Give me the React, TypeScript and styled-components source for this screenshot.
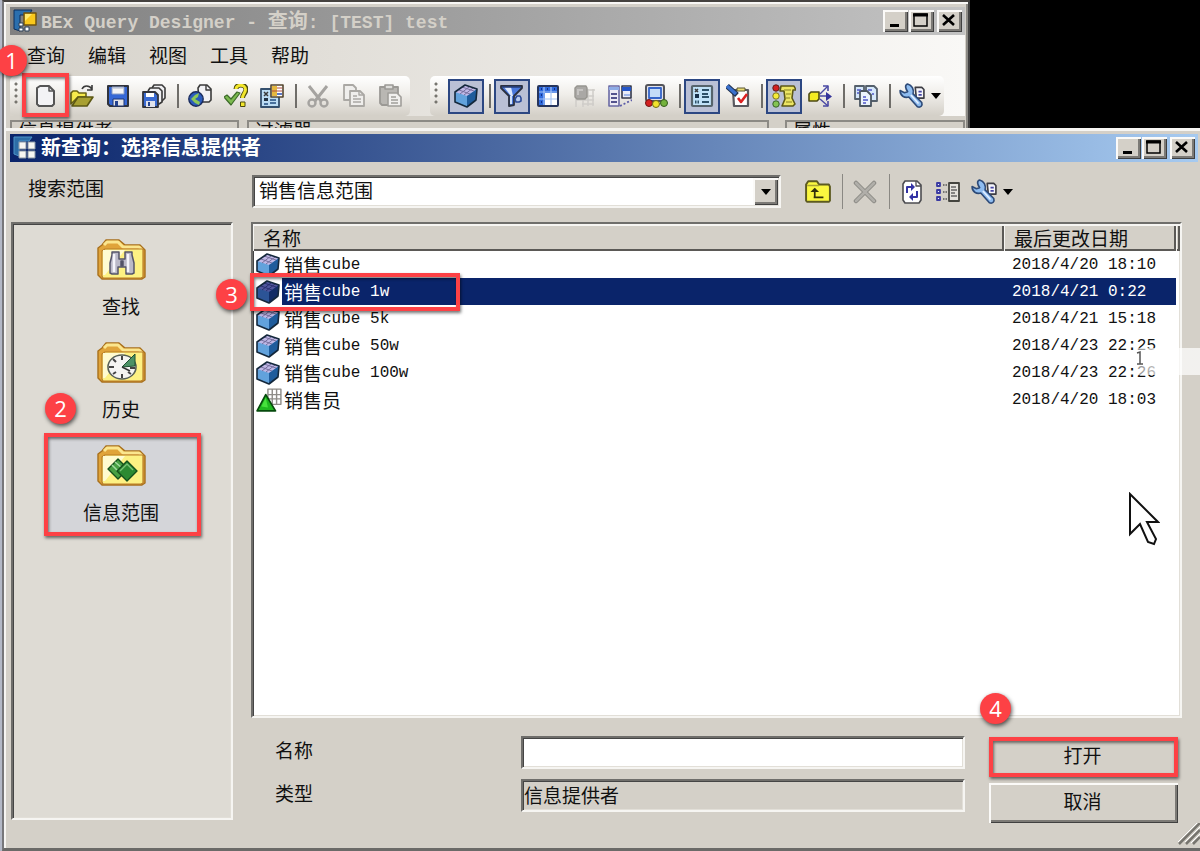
import React from 'react';
import styled, { createGlobalStyle, css } from 'styled-components';

const CJK = '"Noto Sans CJK SC", sans-serif';
const MONO = '"Liberation Mono", "Noto Sans CJK SC", monospace';
const FACE = '#d4d0c8';
const RED = '#fd4145';
const NAVY = '#0a246a';

const Global = createGlobalStyle`
  * { box-sizing: border-box; }
  body { margin: 0; background: #000; font-family: ${CJK}; font-size: 19px; line-height: 24px; color: #111; }
  button, input, select { font: inherit; color: inherit; margin: 0; }
  svg { display: block; }
`;

const raised = css`
  background: ${FACE};
  border: 0;
  box-shadow: inset 2px 2px 0 #fbfaf8, inset -1px -1px 0 #404040, inset -3px -3px 0 #7c7a76;
`;

const sunken = css`
  border: 2px solid;
  border-color: #6f6e6b #f6f5f2 #f6f5f2 #6f6e6b;
  box-shadow: inset 1px 1px 0 #454545, inset -1px -1px 0 #e2dfd8;
`;

/* ---------- windows ---------- */

const Page = styled.div`
  min-height: 100vh;
  display: flex;
  flex-direction: column;
  padding-left: 2px;
  background: linear-gradient(to right, #b3b8c6 2px, #000 2px);
`;

const MainWindow = styled.section`
  height: 128px;
  overflow: hidden;
  margin-right: 230px;
  padding: 3px 3px 0 6px;
  background: ${FACE};
  border: solid;
  border-width: 2px 2px 0 2px;
  border-color: #45423f #404040 #404040 #77777a;
  box-shadow: inset 2px 2px 0 #f8f7f5, inset -2px 0 0 #8b8984;
`;

const Dialog = styled.section`
  position: relative;
  flex: 1;
  display: flex;
  flex-direction: column;
  padding: 4px 0 0 6px;
  background: ${FACE};
  border: solid;
  border-width: 0 0 3px 2px;
  border-color: #6b6a68 #6b6a68 #6b6a68 #77777a;
  box-shadow: inset 2px 3px 0 #f6f5f2;
`;

const TitleBar = styled.header<{ $active?: boolean }>`
  display: flex;
  align-items: center;
  height: 28px;
  flex: none;
  padding: 0 3px;
  margin: ${p => (p.$active ? '2px 2px 0 0' : '2px 0 0')};
  color: ${p => (p.$active ? '#fff' : FACE)};
  background: ${p =>
    p.$active ? `linear-gradient(to right, ${NAVY}, #a6caf0)` : 'linear-gradient(to right, #808080, #c3c3c3)'};
`;

const Title = styled.h1`
  flex: 1;
  margin: 0 0 0 4px;
  font-family: ${MONO};
  font-size: 18px;
  line-height: 24px;
  font-weight: 700;
  white-space: pre;
`;

const TitleHan = styled.span`
  font-family: ${CJK};
  font-size: 20px;
`;

const Controls = styled.div`
  display: flex;
  gap: 1px;
`;

const ControlButton = styled.button<{ $apart?: boolean }>`
  ${raised}
  display: flex;
  align-items: center;
  justify-content: center;
  width: 25px;
  height: 22px;
  padding: 0 2px 2px 0;
  margin-left: ${p => (p.$apart ? '2px' : 0)};
`;

/* ---------- main window chrome ---------- */

const Chrome = styled.div`
  background: linear-gradient(to right, #d6d2ca, #f9f8f6);
`;

const MenuBar = styled.nav`
  display: flex;
  gap: 23px;
  height: 41px;
  padding: 8px 0 0 17px;
`;

const MenuButton = styled.button`
  padding: 0;
  height: 24px;
  border: 0;
  background: none;
  line-height: 24px;
`;

const ToolRow = styled.div`
  display: flex;
  gap: 20px;
`;

const ToolStrip = styled.div`
  display: flex;
  align-items: center;
  height: 40px;
  padding-right: 2px;
  border-radius: 5px;
  background: linear-gradient(#fff, #f0eeea 45%, #d3cfc7);
`;

const Grip = styled.span`
  width: 4px;
  height: 24px;
  margin: 0 10px 4px 4px;
  background: radial-gradient(circle at 2px 2px, #77756f 1px, transparent 2px) 0 0 / 4px 6px;
`;

const ToolButton = styled.button<{ $on?: boolean }>`
  position: relative;
  display: flex;
  align-items: center;
  justify-content: center;
  width: 36px;
  height: 35px;
  padding: 0;
  border: 2px solid ${p => (p.$on ? '#2c4782' : 'transparent')};
  background: ${p => (p.$on ? '#bac0d5' : 'none')};
`;

const Divider = styled.span<{ $tall?: boolean }>`
  width: ${p => (p.$tall ? '1px' : '2px')};
  height: ${p => (p.$tall ? '35px' : '24px')};
  margin: ${p => (p.$tall ? '0 4px 0 6px' : '0 3px 0 5px')};
  background: ${p => (p.$tall ? '#8a8883' : '#6f6d69')};
`;

const DropButton = styled.button`
  display: flex;
  align-items: center;
  justify-content: center;
  width: 12px;
  height: 35px;
  padding: 0;
  border: 0;
  background: none;
`;

const Panels = styled.div`
  display: grid;
  grid-template-columns: 229px 1fr 180px;
  gap: 8px;
  height: 12px;
  padding-top: 4px;
  background: ${FACE};
`;

const Panel = styled.div<{ $gap?: boolean }>`
  height: 8px;
  overflow: hidden;
  padding-left: 6px;
  margin-right: ${p => (p.$gap ? '8px' : 0)};
  border: solid #8c8a85;
  border-width: 2px 2px 0;
  line-height: 16px;
`;

/* ---------- dialog ---------- */

const SearchRow = styled.div`
  display: flex;
  align-items: center;
  padding: 13px 186px 14px 18px;
`;

const SearchLabel = styled.label`
  width: 224px;
  padding-bottom: 8px;
`;

const Combo = styled.div`
  ${sunken}
  position: relative;
  flex: 1;
  height: 33px;
  background: #fff;
`;

const ComboSelect = styled.select`
  appearance: none;
  display: block;
  width: 100%;
  height: 29px;
  padding: 0 30px 3px 5px;
  border: 0;
  background: transparent;
`;

const ComboArrow = styled.span`
  ${raised}
  position: absolute;
  top: 1px;
  right: 1px;
  display: flex;
  align-items: center;
  justify-content: center;
  width: 25px;
  height: 27px;
  pointer-events: none;
`;

const DialogTools = styled.div`
  display: flex;
  align-items: center;
  height: 33px;
  margin-left: 19px;
`;

const Body = styled.div`
  flex: 1;
  display: grid;
  grid-template-columns: 222px 1fr;
  gap: 18px;
  padding: 0 18px 0 1px;
`;

const Sidebar = styled.nav`
  ${sunken}
  display: flex;
  flex-direction: column;
  align-items: center;
  padding-top: 3px;
  margin-bottom: 3px;
  background: #dedbd4;
`;

const SideButton = styled.button<{ $on?: boolean }>`
  position: relative;
  display: flex;
  flex-direction: column;
  align-items: center;
  gap: 14px;
  width: 157px;
  height: 103px;
  padding: 12px 2px 12px 0;
  border: 0;
  line-height: 24px;
  background: ${p => (p.$on ? '#d4d5d9' : 'none')};
`;

const Content = styled.div`
  display: flex;
  flex-direction: column;
`;

const FileWell = styled.div`
  ${sunken}
  flex: 1;
  margin-bottom: 18px;
  background: #fff;
`;

const FileTable = styled.table`
  width: 100%;
  border-collapse: separate;
  border-spacing: 0;
  table-layout: fixed;
  font-family: ${MONO};
  font-size: 16px;
`;

const Head = styled.th`
  height: 27px;
  padding: 0 0 0 10px;
  text-align: left;
  font-family: ${CJK};
  font-size: 19px;
  line-height: 24px;
  font-weight: 400;
  background: ${FACE};
  box-shadow: inset 1px 2px 0 #f6f5f2, inset -2px -2px 0 #5b5956;
`;

const Cell = styled.td`
  height: 27px;
  padding: 0;
  line-height: 24px;
  white-space: pre;
`;

const IconCell = styled(Cell)`
  position: relative;
  padding-left: 3px;
`;

const DateCell = styled(Cell)`
  padding-left: 8px;
`;

const Row = styled.tr<{ $on?: boolean }>`
  ${p =>
    p.$on &&
    css`
      color: #fff;
      ${Cell}:nth-child(2), ${DateCell} {
        background: ${NAVY};
      }
    `}
`;

const Name = styled.span`
  display: flex;
  align-items: center;
  height: 24px;
  padding-left: 2px;
`;

const Han = styled.span`
  font-family: ${CJK};
  font-size: 19px;
`;

const Form = styled.div`
  display: grid;
  grid-template-columns: 1fr 189px;
  gap: 24px;
  padding: 0 4px 0 24px;
`;

const Fields = styled.div`
  display: grid;
  grid-template-columns: 246px 1fr;
  row-gap: 10px;
  align-content: start;
`;

const FieldLabel = styled.label`
  line-height: 28px;
`;

const Field = styled.input`
  ${sunken}
  width: 100%;
  height: 33px;
  padding: 0 1px 3px;
  border-radius: 0;
  background: ${p => (p.readOnly ? FACE : '#fff')};
`;

const Actions = styled.div`
  display: flex;
  flex-direction: column;
  gap: 6px;
  padding-top: 1px;
`;

const Action = styled.button`
  ${raised}
  position: relative;
  height: 40px;
  padding: 0 2px 4px 0;
`;

const Footer = styled.footer`
  display: flex;
  justify-content: flex-end;
  height: 25px;
`;

/* ---------- annotations ---------- */

const Mark = styled.span<{ $w?: number; $h?: number; $x?: number; $y?: number }>`
  position: absolute;
  z-index: 2;
  left: ${p => p.$x ?? 0}px;
  top: ${p => p.$y ?? 0}px;
  width: ${p => (p.$w ? `${p.$w}px` : '100%')};
  height: ${p => (p.$h ? `${p.$h}px` : '100%')};
  border: 4px solid ${RED};
  box-shadow: 1px 2px 3px rgba(0, 0, 0, 0.55), inset 1px 2px 3px rgba(0, 0, 0, 0.5);
  pointer-events: none;
`;

const Badge = styled.span<{ $x: number; $y: number }>`
  position: absolute;
  z-index: 3;
  left: ${p => p.$x}px;
  top: ${p => p.$y}px;
  width: 31px;
  height: 31px;
  border-radius: 50%;
  background: ${RED};
  color: #fff;
  font-family: "Open Sans", sans-serif;
  font-size: 22px;
  line-height: 31px;
  text-align: center;
  box-shadow: 1px 2px 4px rgba(0, 0, 0, 0.65);
  pointer-events: none;
`;

const Ghost = styled.span`
  position: absolute;
  right: 0;
  top: 220px;
  width: 66px;
  height: 27px;
  padding-left: 2px;
  background: linear-gradient(to right, rgba(255, 255, 255, 0.5), rgba(255, 255, 255, 0.7) 20px);
  pointer-events: none;
`;

const Pointer = styled.span`
  position: absolute;
  right: 40px;
  top: 364px;
  pointer-events: none;
`;

/* ---------- icons ---------- */

type IconProps = { children: React.ReactNode; size?: number };
const Icon = ({ children, size = 24 }: IconProps) => (
  <svg width={size} height={size} viewBox="0 0 24 24" fill="none" strokeLinejoin="round" aria-hidden="true">
    {children}
  </svg>
);

const Down = () => (
  <svg width="10" height="6" viewBox="0 0 10 6" aria-hidden="true">
    <path d="M0 0H10L5 6Z" fill="#000" />
  </svg>
);

const INK = '#3a3a3a';

const NewIcon = () => (
  <Icon>
    <path d="M6 2H15L20 7V20L18 22H5L3 20V4Z" fill="#f3f3f5" stroke="#555" strokeWidth="2" />
    <path d="M15 2V7H20" stroke="#555" strokeWidth="1.5" />
  </Icon>
);
const OpenIcon = () => (
  <Icon>
    <path d="M1 20V9L3 7H7L9 9H16V13H8Z" fill="#f6ea4c" stroke="#6c6414" strokeWidth="1.6" />
    <path d="M2 22L8 13H23L17 22Z" fill="#a8a032" stroke="#5c5814" strokeWidth="1.6" />
    <path d="M12 5C14 1 19 1 22 5M22 1V6H17" stroke={INK} strokeWidth="1.6" />
  </Icon>
);
const SaveIcon = () => (
  <Icon>
    <path d="M2 2H22V22H4L2 20Z" fill="#3668d6" stroke="#30333c" strokeWidth="2" />
    <path d="M6 3H18V10H6Z" fill="#f4f4f6" stroke="#8a9cc4" />
    <path d="M7 15H18V22H7Z" fill="#e4e4e8" stroke="#1c3474" />
    <path d="M9 17H12V22H9Z" fill="#24428e" />
    <path d="M7 4H17" stroke="#aab4c8" />
  </Icon>
);
const SaveAllIcon = () => (
  <Icon>
    <path d="M10 4L12 1H20L23 4V14L20 17H17" fill="#f0f0f2" stroke={INK} strokeWidth="1.6" />
    <path d="M6 7L8 4H17L20 7V18L17 20H14" fill="#f0f0f2" stroke={INK} strokeWidth="1.6" />
    <path d="M1 8H13L16 11V23H1Z" fill="#3a6bd2" stroke="#30333c" strokeWidth="1.8" />
    <path d="M4 9H12V13H4Z" fill="#fff" />
    <path d="M4 17H13V23H4Z" fill="#dfe2ec" />
    <path d="M6 18H8V22H6Z" fill="#24428e" />
  </Icon>
);
const GlobeIcon = () => (
  <Icon>
    <path d="M10 4L12 1H19L23 5V16L21 18H11Z" fill="#f2f2f5" stroke={INK} strokeWidth="1.6" />
    <path d="M18 1V6H23" stroke={INK} strokeWidth="1.4" />
    <circle cx="8" cy="15" r="7.2" fill="#2b5cbc" stroke="#1b2c5c" strokeWidth="1.4" />
    <path d="M3 15L7 11L11 9L10 13L7 15L12 18L11 21L7 19Z" fill="#8cc858" />
  </Icon>
);
const CheckHelpIcon = () => (
  <Icon>
    <path d="M12 5C12 -0.5 22 -0.5 22 5.5C22 9 18.500 10 18.500 14" stroke="#4b4a10" strokeWidth="5" />
    <path d="M12 5C12 0 21.500 0 21.500 5.500C21.500 9 18.500 10 18.500 14" stroke="#f2e62c" strokeWidth="3" />
    <rect x="16.500" y="18" width="4.500" height="4.500" fill="#f2e62c" stroke="#4b4a10" />
    <path d="M0 13L3 11L7 15L13 8L16 9L7 21Z" fill="#7cba50" stroke="#3d6b2a" strokeWidth="1.2" />
  </Icon>
);
const PropsIcon = () => (
  <Icon>
    <path d="M1 5H19V23H1Z" fill="#bcdcf4" stroke="#35506e" strokeWidth="1.8" />
    <path d="M4 8L8 12M8 8L4 12" stroke={INK} strokeWidth="1.5" />
    <rect x="4" y="14" width="4" height="3" fill="#234" />
    <path d="M10 16H16M10 19H16M4 20H8" stroke="#234e80" strokeWidth="1.6" />
    <rect x="11" y="1" width="12" height="12" fill="#fff" stroke="#54452e" strokeWidth="1.6" />
    <path d="M12 2H17V12H12Z" fill="#e5b840" />
    <path d="M17 4H22M17 7H22M12 7H17" stroke="#b34a3c" />
    <path d="M17 10H22" stroke="#3858b8" strokeWidth="1.6" />
  </Icon>
);
const CutIcon = () => (
  <Icon>
    <path d="M3 2L15 17M21 2L9 17" stroke="#a5a3a0" strokeWidth="3" />
    <circle cx="6" cy="19" r="3.500" stroke="#a5a3a0" strokeWidth="2.4" />
    <circle cx="18" cy="19" r="3.500" stroke="#a5a3a0" strokeWidth="2.4" />
  </Icon>
);
const CopyIcon = () => (
  <Icon>
    <path d="M2 1H11L14 4V16H2Z" fill="#efeeec" stroke="#aaa8a4" strokeWidth="1.8" />
    <path d="M8 7H18L22 11V22H8Z" fill="#efeeec" stroke="#aaa8a4" strokeWidth="1.8" />
    <path d="M17 7V11H22M11 12H15M11 15H19M11 18H19" stroke="#aaa8a4" strokeWidth="1.4" />
  </Icon>
);
const PasteIcon = () => (
  <Icon>
    <path d="M2 3H20V21H4L2 19Z" fill="#b9b7b3" stroke="#9b9995" strokeWidth="1.8" />
    <path d="M7 1H15V5H7Z" fill="#deddda" stroke="#9b9995" strokeWidth="1.6" />
    <path d="M10 9H19L23 13V22H10Z" fill="#f1f0ee" stroke="#a09e9a" strokeWidth="1.6" />
    <path d="M13 13H18M13 16H20M13 19H20" stroke="#a09e9a" strokeWidth="1.4" />
  </Icon>
);
const CubeIcon = ({ dark }: { dark?: boolean }) => (
  <Icon>
    <path d="M1 8L11 1L23 5L22 16L13 23L1 18Z" fill={dark ? '#2c5496' : '#62a2dc'} />
    <path d="M1 8L11 1L23 5L13 12Z" fill={dark ? '#50569c' : '#c0b8e6'} />
    <path d="M13 12L23 5L22 16L13 23Z" fill={dark ? '#122c66' : '#1f5c9c'} />
    <path d="M5 6L16 10M8 3L20 7M6 10L15 3M10 11L19 4" stroke={dark ? '#2a3070' : '#77709e'} />
    <path d="M1 8L11 1L23 5L22 16L13 23L1 18Z" stroke="#14283c" strokeWidth="1.600" />
  </Icon>
);
const FilterIcon = () => (
  <Icon>
    <path d="M1 2H22V4L14 12V21L9 22V12L1 4Z" fill="#4a78dc" stroke="#2a3040" strokeWidth="1.8" />
    <path d="M4 3H11L13 12H11Z" fill="#dce8fc" />
    <path d="M2 3H21" stroke="#27407c" strokeWidth="1.6" />
    <path d="M11 12V20" stroke="#cfe0fa" strokeWidth="2" />
    <path d="M17 12H20L21 14V17L19 18H16L15 15Z" fill="#b8ccf0" stroke="#2b4a98" strokeWidth="1.6" />
  </Icon>
);
const GridIcon = () => (
  <Icon>
    <rect x="2" y="2" width="20" height="20" rx="1" fill="#2f6ade" stroke="#27355c" strokeWidth="2" />
    <path d="M9 9H21V21H9Z" fill="#fff" />
    <path d="M3 8H21M3 15H21M8 3V21M15 3V21" stroke="#a6c4f6" strokeWidth="1.2" />
    <path d="M5 5h1M11 5h1M18 5h1M5 11h1M5 18h1" stroke="#12308a" strokeWidth="2" />
  </Icon>
);
const GreyGridIcon = () => (
  <Icon>
    <path d="M4 13V23M4 16H22M10 20H22M11 12V23M16 5V22M21 5V22M12 6H23M12 12H22" stroke="#cfcdc9" strokeWidth="1.500" />
    <path d="M3 4L5 2H14L15 4V13L13 15H5L3 13Z" fill="#aaa8a5" stroke="#979590" strokeWidth="1.400" />
    <path d="M5 5H11V7H7V11H5Z" fill="#c6c4c2" />
  </Icon>
);
const ColumnsIcon = () => (
  <Icon>
    <path d="M1 2H11V22H1Z" fill="#eceaf4" stroke="#6a69a4" strokeWidth="1.6" />
    <path d="M1 3H11V6H1Z" fill="#8dabe6" />
    <path d="M3 10H9M3 14H9M3 18H9" stroke="#54538e" strokeWidth="2" />
    <path d="M14 2H23V14H14Z" fill="#e8ecf8" stroke="#33384c" strokeWidth="1.6" />
    <path d="M14 3H23V7H14Z" fill="#2456c8" />
    <path d="M16 11H22" stroke="#8dabe6" strokeWidth="1.600" />
    <path d="M12 22L24 16" stroke="#5c5ca8" strokeWidth="1.8" strokeDasharray="2 2" />
  </Icon>
);
const LightsScreenIcon = () => (
  <Icon>
    <rect x="2" y="1" width="18" height="16" rx="2" fill="#e1e2ea" stroke="#54545a" strokeWidth="2" />
    <rect x="5" y="4" width="12" height="10" fill="#c4dcf8" stroke="#3564c8" strokeWidth="1.8" />
    <circle cx="5" cy="19" r="3.500" fill="#d42020" stroke="#6c1414" />
    <circle cx="12" cy="20" r="3.500" fill="#f2e32c" stroke="#6f6914" />
    <circle cx="20" cy="19" r="3.500" fill="#74b23c" stroke="#345a1c" />
  </Icon>
);
const SheetIcon = () => (
  <Icon>
    <rect x="2" y="2" width="20" height="20" rx="1" fill="#c0e2f8" stroke="#56646c" strokeWidth="2.2" />
    <path d="M5 5L8 8M8 5L5 8" stroke={INK} strokeWidth="1.5" />
    <rect x="5" y="10" width="4" height="4" fill="#173048" />
    <path d="M12 6H19M12 10H18M12 13H19M12 18H19" stroke="#2c5068" strokeWidth="1.8" />
    <path d="M5 18H9" stroke="#2c5068" strokeWidth="3" strokeDasharray="1.500 1" />
  </Icon>
);
const TaskIcon = () => (
  <Icon>
    <path d="M7 6H22V22H8Z" fill="#fff" stroke="#5a5a60" strokeWidth="2.2" />
    <path d="M11 4H19V7H11Z" fill="#eadc74" stroke="#5a5630" />
    <path d="M12 14L15 18L21 10" stroke="#dc2222" strokeWidth="2.6" />
    <path d="M1 2L11 11" stroke="#20304e" strokeWidth="5.500" />
    <path d="M1 2L10 10" stroke="#3a70cc" strokeWidth="3.5" />
  </Icon>
);
const ScrollLightsIcon = () => (
  <Icon>
    <path d="M9 2H22L24 6H21L20 14L23 20L21 22H10L13 15L12 7H8Z" fill="#ece564" stroke="#5c5818" strokeWidth="1.6" />
    <path d="M12 6H19M14 10H19M14 14H18M14 18H20" stroke="#a9a238" strokeWidth="1.4" />
    <circle cx="4" cy="4" r="3.200" fill="#d42020" stroke="#5c1c1c" />
    <circle cx="4" cy="12" r="3.200" fill="#f6ec38" stroke="#7c7420" />
    <circle cx="4" cy="20" r="3.200" fill="#84c454" stroke="#38602a" />
  </Icon>
);
const ExportIcon = () => (
  <Icon>
    <path d="M12 12H20M12 10L20 2M12 15L20 22" stroke="#4a49a4" strokeWidth="1.400" />
    <path d="M15 2H20V7M15 22H20V17" stroke="#4a49a4" strokeWidth="1.600" />
    <path d="M18 8L24 12.500L18 17Z" fill="#34339a" />
    <path d="M1 10L3 8H11V15L9 17H1Z" fill="#f4ec20" stroke="#4c4a14" strokeWidth="1.6" />
  </Icon>
);
const PagesIcon = () => (
  <Icon>
    <path d="M1 2H10V15H1Z" fill="#d6e8fb" stroke="#55606c" strokeWidth="1.8" />
    <path d="M12 2H20L23 5V17H12Z" fill="#d6e8fb" stroke="#55606c" strokeWidth="1.8" />
    <path d="M6 7H13L17 11V22H6Z" fill="#eaf3fd" stroke="#4b5662" strokeWidth="1.8" />
    <path d="M3 6H7M3 9H5M14 6H18M18 10H20M9 13H12M9 16H14M9 19H12" stroke="#4f57c8" strokeWidth="1.6" />
  </Icon>
);
const WrenchIcon = () => (
  <Icon size={26}>
    <path d="M15 4H21L23 6V14H16Z" fill="#f6f6fb" stroke="#3d3d44" strokeWidth="1.500" />
    <path d="M18 8H21M18 11H21" stroke="#4545a4" strokeWidth="1.500" />
    <path d="M8 1C5 2 6 5 8 8L5 9L1 7C1 12 5 14 9 13L17 22C20 23 22 21 21 18L13 10C14 6 12 2 8 1Z" fill="#8ebcf0" stroke="#2d4a78" strokeWidth="1.500" />
    <path d="M11 11L18 19" stroke="#e4f0ff" strokeWidth="1.500" />
  </Icon>
);
const UpFolderIcon = () => (
  <Icon size={26}>
    <path d="M1 5L3 2H11L13 5H22L23 7V20L22 21H2L1 20Z" fill="#fbf840" stroke="#5c5a20" strokeWidth="1.8" />
    <path d="M2 6H13" stroke="#aaa433" strokeWidth="1.400" />
    <path d="M9 17V9M8 17H17" stroke="#33320c" strokeWidth="1.600" />
    <path d="M5 12L9 8L13 12Z" fill="#33320c" />
  </Icon>
);
const DeleteIcon = () => (
  <Icon>
    <path d="M3 3L21 21M21 3L3 21" stroke="#8a8883" strokeWidth="4.500" strokeLinecap="round" />
    <path d="M3 3L21 21M21 3L3 21" stroke="#b0aea9" strokeWidth="2.600" strokeLinecap="round" />
  </Icon>
);
const RefreshIcon = () => (
  <Icon>
    <path d="M5 1H17L21 5V20L19 23H5L3 20V4Z" fill="#fff" stroke="#4c4c50" strokeWidth="1.600" />
    <path d="M16 1V6H21" stroke="#4c4c50" strokeWidth="1.300" />
    <path d="M7 13V7H12M17 11V17H12" stroke="#3333a4" strokeWidth="2" />
    <path d="M11 3L15 7L11 11ZM13 13L9 17L13 21Z" fill="#3333a4" />
  </Icon>
);
const DetailsIcon = () => (
  <Icon>
    <path d="M1 3H4V6H1ZM1 10H4V13H1ZM1 17H4V20H1Z" fill="#f2f2ff" stroke="#3a3aa2" strokeWidth="1.800" />
    <path d="M7 5H11M7 12H11M7 19H11" stroke="#555" strokeWidth="1.500" strokeDasharray="1.500 1" />
    <path d="M13 3H23V21H13Z" fill="#e4e2dd" stroke="#44443f" strokeWidth="1.800" />
    <path d="M15 7H20M15 10H21M15 13H19M15 16H21" stroke="#666" strokeWidth="1.400" />
  </Icon>
);
const DimensionIcon = () => (
  <Icon size={26}>
    <path d="M11 2H23V16H11ZM15 2V16M19 2V16M11 7H23M11 11H23" fill="#fff" stroke="#8e8c88" strokeWidth="1.300" />
    <path d="M9 7L18 22H1Z" fill="#20b820" stroke="#064a0c" strokeWidth="1.600" />
    <path d="M9 10L5 18L11 19Z" fill="#46e23c" />
  </Icon>
);

const AppIcon = () => (
  <Icon>
    <path d="M1 1H19L16 6H7V22L1 20Z" fill="#2b6fae" stroke="#0c2f5c" />
    <rect x="11" y="4" width="12" height="12" fill="#f9c81c" stroke="#6f5310" strokeWidth="1.500" />
    <path d="M12 5H19L12 12Z" fill="#ffea70" />
    <path d="M6 14H10V17H6ZM12 18H16V22H12ZM6 19H10V22H6Z" fill="#fff" stroke="#2c4058" />
  </Icon>
);
const DialogIcon = () => (
  <Icon>
    <path d="M1 1H19L16 5H6V20L1 18Z" fill="#2d6da6" stroke="#4d94c8" />
    <path d="M6 6H13V13H6ZM15 6H22V13H15ZM6 15H13V22H6ZM15 15H22V22H15Z" fill="#f7f6f2" stroke="#8a97a4" />
  </Icon>
);

type Emblem = 'find' | 'history' | 'area';
const FolderIcon = ({ emblem }: { emblem: Emblem }) => (
  <svg width="49" height="41" viewBox="0 0 49 41" fill="none" strokeLinejoin="round" aria-hidden="true">
    <path d="M1 36V9L5 6L9 1H22L28 6H43L48 11V38L45 40H5Z" fill="#e0a43a" stroke="#a8701c" strokeWidth="1.400" />
    <path d="M7 6L10 3H21L26 8H42L45 11" stroke="#fbe68e" strokeWidth="3" />
    <path d="M5 12L8 10H46V38L44 39H6L5 37Z" fill="#fdf183" stroke="#b87c28" strokeWidth="1.200" />
    <path d="M6 36V11H28L8 36Z" fill="#fffbd0" />
    {emblem === 'find' && (
      <g stroke="#55556a" strokeWidth="1.500">
        <path d="M13 34V24L15 16V13H22V20H28V13H35V16L37 24V34L35 35H29V28H21V35H15Z" fill="#bbbac8" />
        <path d="M17 15V33M31 15V33" stroke="#f6f6fb" strokeWidth="2.500" />
        <path d="M24 22H26V27H24Z" fill="#4c4c5c" />
      </g>
    )}
    {emblem === 'history' && (
      <g>
        <ellipse cx="25" cy="25" rx="14" ry="12" fill="#f4f4f2" stroke="#576058" strokeWidth="1.600" />
        <path d="M25 14V18M25 32V36M12 25H17M33 26H38M16 17L19 20M16 32L19 30M34 32L31 30" stroke="#444" strokeWidth="2" />
        <path d="M25 25L38 12V24Z" fill="#4d9266" stroke="#1c5030" />
        <path d="M25 25L33 29" stroke="#333" strokeWidth="1.500" />
      </g>
    )}
    {emblem === 'area' && (
      <g stroke="#14501c" strokeWidth="1.400">
        <path d="M11 24L21 14L31 24L21 34Z" fill="#47a043" />
        <path d="M18 17L25 23M15 20L24 29" stroke="#a3dca0" strokeWidth="1.500" />
        <path d="M20 26L30 16L40 26L30 36Z" fill="#2c8a32" />
        <path d="M23 26L30 19L36 25" stroke="#79c476" />
      </g>
    )}
  </svg>
);

/* ---------- data ---------- */

type Tool = { label: string; icon: React.ReactNode; on?: boolean; marked?: boolean } | null;

const FILE_TOOLS: Tool[] = [
  { label: '新建', icon: <NewIcon />, marked: true },
  { label: '打开', icon: <OpenIcon /> },
  { label: '保存', icon: <SaveIcon /> },
  { label: '全部保存', icon: <SaveAllIcon /> },
  null,
  { label: '发布', icon: <GlobeIcon /> },
  { label: '检查', icon: <CheckHelpIcon /> },
  { label: '查询属性', icon: <PropsIcon /> },
  null,
  { label: '剪切', icon: <CutIcon /> },
  { label: '复制', icon: <CopyIcon /> },
  { label: '粘贴', icon: <PasteIcon /> },
];

const VIEW_TOOLS: Tool[] = [
  { label: '信息提供者', icon: <CubeIcon />, on: true },
  null,
  { label: '过滤器', icon: <FilterIcon />, on: true },
  { label: '行/列', icon: <GridIcon /> },
  { label: '单元格', icon: <GreyGridIcon /> },
  { label: '条件', icon: <ColumnsIcon /> },
  { label: '例外', icon: <LightsScreenIcon /> },
  null,
  { label: '属性', icon: <SheetIcon />, on: true },
  { label: '任务', icon: <TaskIcon /> },
  null,
  { label: '消息', icon: <ScrollLightsIcon />, on: true },
  { label: '使用位置', icon: <ExportIcon /> },
  null,
  { label: '文档', icon: <PagesIcon /> },
  null,
  { label: '技术名称', icon: <WrenchIcon /> },
];

const FILES = [
  { han: '销售', rest: 'cube', date: '2018/4/20 18:10' },
  { han: '销售', rest: 'cube 1w', date: '2018/4/21 0:22', on: true },
  { han: '销售', rest: 'cube 5k', date: '2018/4/21 15:18' },
  { han: '销售', rest: 'cube 50w', date: '2018/4/23 22:25' },
  { han: '销售', rest: 'cube 100w', date: '2018/4/23 22:26' },
  { han: '销售员', rest: '', date: '2018/4/20 18:03', dimension: true },
];

const Tools = ({ items }: { items: Tool[] }) => (
  <>
    {items.map((t, i) =>
      t ? (
        <ToolButton key={i} $on={t.on} aria-label={t.label}>
          {t.icon}
          {t.marked && <Mark $x={-8} $y={-8} $w={47} $h={44} />}
        </ToolButton>
      ) : (
        <Divider key={i} />
      ),
    )}
  </>
);

const WindowControls = () => (
  <Controls>
    <ControlButton aria-label="最小化">
      <svg width="14" height="14" viewBox="0 0 14 14"><path d="M2 11H11V14H2Z" fill="#000" /></svg>
    </ControlButton>
    <ControlButton aria-label="最大化">
      <svg width="15" height="14" viewBox="0 0 15 14"><path d="M1 1V13H14V1Z" fill="none" stroke="#000" strokeWidth="1.500" /><path d="M0 2H15" stroke="#000" strokeWidth="3" /></svg>
    </ControlButton>
    <ControlButton $apart aria-label="关闭">
      <svg width="13" height="12" viewBox="0 0 13 12"><path d="M1 1L12 11M12 1L1 11" stroke="#000" strokeWidth="2.600" /></svg>
    </ControlButton>
  </Controls>
);

export default function App() {
  return (
    <Page>
      <Global />
      <MainWindow>
        <TitleBar>
          <AppIcon />
          <Title>BEx Query Designer - <TitleHan>查询</TitleHan>: [TEST] test</Title>
          <WindowControls />
        </TitleBar>
        <Chrome>
          <MenuBar>
            {['查询', '编辑', '视图', '工具', '帮助'].map(m => (
              <MenuButton key={m}>{m}</MenuButton>
            ))}
          </MenuBar>
          <ToolRow>
            <ToolStrip>
              <Grip />
              <Tools items={FILE_TOOLS} />
            </ToolStrip>
            <ToolStrip>
              <Grip />
              <Tools items={VIEW_TOOLS} />
              <DropButton aria-label="更多"><Down /></DropButton>
            </ToolStrip>
          </ToolRow>
          <Panels>
            <Panel>信息提供者</Panel>
            <Panel $gap>过滤器</Panel>
            <Panel>属性</Panel>
          </Panels>
        </Chrome>
      </MainWindow>
      <Dialog role="dialog" aria-labelledby="dialog-title">
        <TitleBar $active>
          <DialogIcon />
          <Title id="dialog-title"><TitleHan>新查询：选择信息提供者</TitleHan></Title>
          <WindowControls />
        </TitleBar>
        <SearchRow>
          <SearchLabel htmlFor="scope">搜索范围</SearchLabel>
          <Combo>
            <ComboSelect id="scope"><option>销售信息范围</option></ComboSelect>
            <ComboArrow><Down /></ComboArrow>
          </Combo>
          <DialogTools>
            <ToolButton aria-label="上一级"><UpFolderIcon /></ToolButton>
            <Divider $tall />
            <ToolButton aria-label="删除" disabled><DeleteIcon /></ToolButton>
            <Divider $tall />
            <ToolButton aria-label="刷新"><RefreshIcon /></ToolButton>
            <ToolButton aria-label="详细信息"><DetailsIcon /></ToolButton>
            <ToolButton aria-label="技术名称"><WrenchIcon /></ToolButton>
            <DropButton aria-label="更多选项"><Down /></DropButton>
          </DialogTools>
        </SearchRow>
        <Body>
          <Sidebar>
            <SideButton><FolderIcon emblem="find" />查找</SideButton>
            <SideButton><FolderIcon emblem="history" />历史</SideButton>
            <SideButton $on><FolderIcon emblem="area" />信息范围<Mark /></SideButton>
          </Sidebar>
          <Content>
            <FileWell>
              <FileTable>
                <colgroup>
                  <col style={{ width: 29 }} />
                  <col />
                  <col style={{ width: 172 }} />
                  <col style={{ width: 4 }} />
                </colgroup>
                <thead>
                  <tr>
                    <Head colSpan={2}>名称</Head>
                    <Head>最后更改日期</Head>
                    <Head as="td" />
                  </tr>
                </thead>
                <tbody>
                  {FILES.map((f, i) => (
                    <Row key={i} $on={f.on} aria-selected={!!f.on}>
                      <IconCell>
                        {f.dimension ? <DimensionIcon /> : <CubeIcon dark={f.on} />}
                        {f.on && <Mark $x={-3} $y={-5} $w={210} $h={38} />}
                      </IconCell>
                      <Cell><Name><Han>{f.han}</Han>{f.rest}</Name></Cell>
                      <DateCell>{f.date}</DateCell>
                    </Row>
                  ))}
                </tbody>
              </FileTable>
            </FileWell>
            <Form>
              <Fields>
                <FieldLabel htmlFor="name">名称</FieldLabel>
                <Field id="name" />
                <FieldLabel htmlFor="type">类型</FieldLabel>
                <Field id="type" readOnly value="信息提供者" />
              </Fields>
              <Actions>
                <Action>打开<Mark /></Action>
                <Action>取消</Action>
              </Actions>
            </Form>
          </Content>
        </Body>
        <Footer>
          <svg width="22" height="22" viewBox="0 0 22 22" aria-hidden="true">
            <path d="M1 21L22 0M8 21L22 7M15 21L22 14" stroke="#77756f" strokeWidth="2.500" />
            <path d="M0 19L20 -1M7 19L22 4M13 20L22 11" stroke="#fff" strokeWidth="1" />
          </svg>
        </Footer>
        <Ghost>
          <svg width="8" height="18" viewBox="0 0 8 18" aria-hidden="true">
            <path d="M1 5L4 4V16M1 16H7" fill="none" stroke="#555" strokeWidth="1.500" />
          </svg>
        </Ghost>
        <Pointer>
          <svg width="32" height="54" viewBox="0 0 32 54" aria-hidden="true">
            <path d="M2 2V42L12 32L20 50L26 52L28 47L19 30H30Z" fill="#fff" stroke="#111" strokeWidth="2" />
          </svg>
        </Pointer>
        <Badge $x={41} $y={265}>2</Badge>
        <Badge $x={212} $y={151}>3</Badge>
        <Badge $x={976} $y={565}>4</Badge>
        <Badge $x={-8} $y={-83}>1</Badge>
      </Dialog>
    </Page>
  );
}
